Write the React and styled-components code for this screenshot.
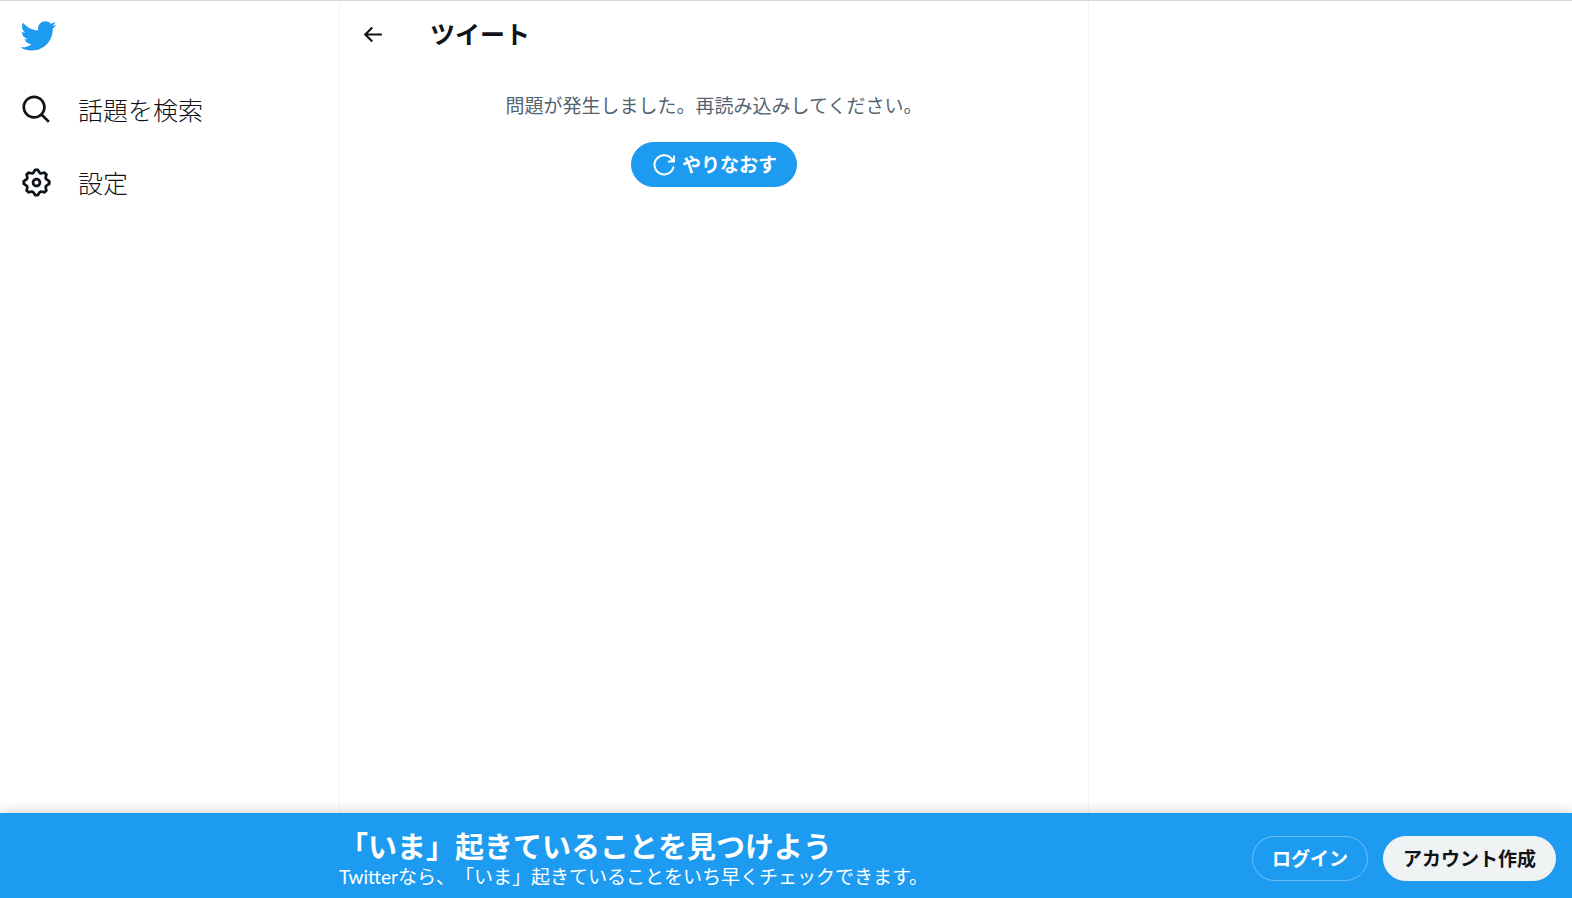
import styled, { createGlobalStyle } from "styled-components";

const GlobalStyle = createGlobalStyle`
  * {
    box-sizing: border-box;
  }

  body {
    margin: 0;
    background-color: #fff;
    color: #0f1419;
    font-family: Lato, "Noto Sans CJK JP", sans-serif;
    text-spacing-trim: space-all;
  }

  h1,
  h2,
  p {
    margin: 0;
  }
`;

const Page = styled.div`
  display: flex;
  flex-direction: column;
  min-height: 100vh;
  border-top: 1px solid #d9d9d9;
`;

const Columns = styled.div`
  display: grid;
  grid-template-columns: 339px minmax(0, 750px) 1fr;
  flex: 1;
`;

const Sidebar = styled.header`
  padding: 5px 0 0 20px;
`;

const LogoLink = styled.a`
  display: flex;
  align-items: center;
  justify-content: center;
  width: 36px;
  height: 60px;
  color: #1d9bf0;
`;

const Nav = styled.nav`
  display: flex;
  flex-direction: column;
  gap: 10px;
  margin-top: 12px;
`;

const NavLink = styled.a`
  display: flex;
  align-items: center;
  gap: 25px;
  height: 63px;
  color: #0f1419;
  font-weight: 300;
  font-size: 25px;
  line-height: 30px;
  text-decoration: none;
`;

const Icon = styled.svg`
  display: block;
  flex: none;
  width: ${({ $size }) => $size}px;
  height: ${({ $size }) => $size}px;
  fill: currentColor;
`;

const Main = styled.main`
  border-left: 1px solid #eff3f4;
  border-right: 1px solid #eff3f4;
`;

const TitleBar = styled.div`
  display: flex;
  align-items: center;
  gap: 45px;
  height: 66px;
  padding: 0 20px;
`;

const BackButton = styled.button`
  padding: 0;
  border: 0;
  background: none;
  color: #0f1419;
  cursor: pointer;
`;

const Title = styled.h2`
  font-weight: 700;
  font-size: 25px;
  line-height: 30px;
`;

const ErrorBox = styled.div`
  display: flex;
  flex-direction: column;
  align-items: center;
  gap: 24px;
  padding: 26px 20px;
`;

const ErrorText = styled.p`
  color: #536471;
  font-weight: 400;
  font-size: 19px;
  line-height: 25px;
`;

const PillButton = styled.button`
  display: flex;
  align-items: center;
  gap: 7px;
  height: 45px;
  padding: 0 19px;
  border: 1px solid ${({ $border }) => $border};
  border-radius: 23px;
  background-color: ${({ $background }) => $background};
  color: ${({ $color }) => $color};
  font-family: inherit;
  font-weight: 700;
  font-size: 19px;
  line-height: 25px;
  white-space: nowrap;
  cursor: pointer;
`;

const BottomBar = styled.footer`
  display: flex;
  align-items: center;
  justify-content: space-between;
  position: sticky;
  bottom: 0;
  height: 85px;
  padding: 6px 16px 0 339px;
  background-color: #1d9bf0;
  box-shadow: 0 0 12px rgba(15, 20, 25, 0.24);
  color: #fff;
`;

const BottomTitle = styled.h1`
  font-weight: 700;
  font-size: 29px;
  line-height: 35px;
`;

const BottomText = styled.p`
  font-weight: 400;
  font-size: 19px;
  line-height: 25px;
`;

const BottomActions = styled.div`
  display: flex;
  gap: 15px;
`;

const BIRD =
  "M23.643 4.937c-.835.37-1.732.62-2.675.733.962-.576 1.7-1.49 2.048-2.578-.9.534-1.897.922-2.958 1.13-.85-.904-2.06-1.47-3.4-1.47-2.572 0-4.658 2.086-4.658 4.66 0 .364.042.718.12 1.06-3.873-.195-7.304-2.05-9.602-4.868-.4.69-.63 1.49-.63 2.342 0 1.616.823 3.043 2.072 3.878-.764-.025-1.482-.234-2.11-.583v.06c0 2.257 1.605 4.14 3.737 4.568-.392.106-.803.162-1.227.162-.3 0-.593-.028-.877-.082.593 1.85 2.313 3.198 4.352 3.234-1.595 1.25-3.604 1.995-5.786 1.995-.376 0-.747-.022-1.112-.065 2.062 1.323 4.51 2.093 7.14 2.093 8.57 0 13.255-7.098 13.255-13.254 0-.2-.005-.402-.014-.602.91-.658 1.7-1.477 2.323-2.41z";

const SEARCH =
  "M10.25 3.75c-3.59 0-6.5 2.91-6.5 6.5s2.91 6.5 6.5 6.5c1.795 0 3.419-.726 4.596-1.904 1.178-1.177 1.904-2.801 1.904-4.596 0-3.59-2.91-6.5-6.5-6.5zm-8.5 6.5c0-4.694 3.806-8.5 8.5-8.5s8.5 3.806 8.5 8.5c0 1.986-.682 3.815-1.824 5.262l4.781 4.781-1.414 1.414-4.781-4.781c-1.447 1.142-3.276 1.824-5.262 1.824-4.694 0-8.5-3.806-8.5-8.5z";

const SETTINGS =
  "M10.54 1.75h2.92l1.57 2.36c.11.17.32.25.53.21l2.53-.59 2.17 2.17-.58 2.54c-.05.2.04.41.21.53l2.36 1.57v2.92l-2.36 1.57c-.17.12-.26.33-.21.53l.58 2.54-2.17 2.17-2.53-.59c-.21-.04-.42.04-.53.21l-1.57 2.36h-2.92l-1.58-2.36c-.11-.17-.32-.25-.52-.21l-2.54.59-2.17-2.17.58-2.54c.05-.2-.03-.41-.21-.53l-2.35-1.57v-2.92L4.1 8.97c.18-.12.26-.33.21-.53L3.73 5.9 5.9 3.73l2.54.59c.2.04.41-.04.52-.21l1.58-2.36zm1.07 2l-.98 1.47C10.05 6.08 9 6.5 7.99 6.27l-1.46-.34-.6.6.33 1.46c.24 1.01-.18 2.07-1.05 2.64l-1.46.98v.78l1.46.98c.87.57 1.29 1.63 1.05 2.64l-.33 1.46.6.6 1.46-.34c1.01-.23 2.06.19 2.64 1.05l.98 1.47h.78l.97-1.47c.58-.86 1.63-1.28 2.65-1.05l1.45.34.61-.6-.34-1.46c-.23-1.01.18-2.07 1.05-2.64l1.47-.98v-.78l-1.47-.98c-.87-.57-1.28-1.63-1.05-2.64l.34-1.46-.61-.6-1.45.34c-1.02.23-2.07-.19-2.65-1.05l-.97-1.47h-.78zM12 10.5c-.83 0-1.5.67-1.5 1.5s.67 1.5 1.5 1.5c.82 0 1.5-.67 1.5-1.5s-.68-1.5-1.5-1.5zM8.5 12c0-1.93 1.56-3.5 3.5-3.5 1.93 0 3.5 1.57 3.5 3.5s-1.57 3.5-3.5 3.5c-1.94 0-3.5-1.57-3.5-3.5z";

const ARROW =
  "M7.414 13l5.043 5.04-1.414 1.42L3.586 12l7.457-7.46 1.414 1.42L7.414 11H21v2H7.414z";

const NAV_ITEMS = [
  { label: "話題を検索", path: SEARCH },
  { label: "設定", path: SETTINGS },
];

function PathIcon({ path, size }) {
  return (
    <Icon viewBox="0 0 24 24" $size={size} aria-hidden="true">
      <path d={path} />
    </Icon>
  );
}

function RetryIcon() {
  return (
    <Icon viewBox="0 0 24 24" $size={24} aria-hidden="true">
      <path
        d="M22.4 14.3A9.6 9.6 0 1 1 21 6.4"
        fill="none"
        stroke="currentColor"
        strokeWidth="2"
        strokeLinecap="round"
      />
      <path d="M22.3 2.4q1.6-.4 1.7 1v5.3q0 .8-.8.8h-5.4q-1.2 0-1-1.2.1-.8 1-.8h1.9l2-1.5z" />
    </Icon>
  );
}

function App() {
  return (
    <>
      <GlobalStyle />
      <Page>
        <Columns>
          <Sidebar>
            <LogoLink href="#" aria-label="Twitter">
              <PathIcon path={BIRD} size={38} />
            </LogoLink>
            <Nav>
              {NAV_ITEMS.map((item) => (
                <NavLink key={item.label} href="#">
                  <PathIcon path={item.path} size={33} />
                  {item.label}
                </NavLink>
              ))}
            </Nav>
          </Sidebar>
          <Main>
            <TitleBar>
              <BackButton type="button" aria-label="戻る">
                <PathIcon path={ARROW} size={25} />
              </BackButton>
              <Title>ツイート</Title>
            </TitleBar>
            <ErrorBox>
              <ErrorText>
                問題が発生しました。再読み込みしてください。
              </ErrorText>
              <PillButton
                type="button"
                $background="#1d9bf0"
                $border="#1d9bf0"
                $color="#fff"
              >
                <RetryIcon />
                やりなおす
              </PillButton>
            </ErrorBox>
          </Main>
        </Columns>
        <BottomBar>
          <div>
            <BottomTitle>「いま」起きていることを見つけよう</BottomTitle>
            <BottomText>
              Twitterなら、「いま」起きていることをいち早くチェックできます。
            </BottomText>
          </div>
          <BottomActions>
            <PillButton
              type="button"
              $background="transparent"
              $border="rgba(255, 255, 255, 0.35)"
              $color="#fff"
            >
              ログイン
            </PillButton>
            <PillButton
              type="button"
              $background="#eff3f4"
              $border="#eff3f4"
              $color="#0f1419"
            >
              アカウント作成
            </PillButton>
          </BottomActions>
        </BottomBar>
      </Page>
    </>
  );
}

export default App;
